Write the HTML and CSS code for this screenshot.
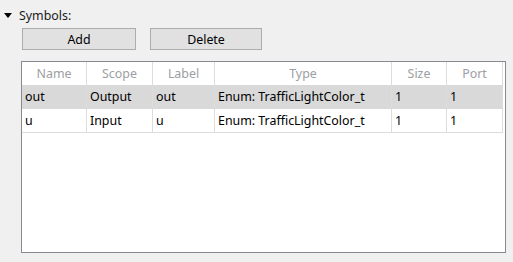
FILE: index.html
```html
<!DOCTYPE html>
<html lang="en">
<head>
  <meta charset="UTF-8">
  <title>Symbols</title>
  <link rel="stylesheet" href="styles.css">
</head>
<body>
  <div class="section">
    <div class="section-title">
      <span class="caret"></span>
      <span>Symbols:</span>
    </div>
    <div class="actions">
      <button class="btn btn-add">Add</button>
      <button class="btn btn-delete">Delete</button>
    </div>
    <div class="grid-box">
      <table class="symbols">
        <thead>
          <tr>
            <th class="c-name">Name</th>
            <th class="c-scope">Scope</th>
            <th class="c-label">Label</th>
            <th class="c-type">Type</th>
            <th class="c-size">Size</th>
            <th class="c-port">Port</th>
          </tr>
        </thead>
        <tbody>
          <tr class="selected">
            <td>out</td>
            <td>Output</td>
            <td>out</td>
            <td>Enum: TrafficLightColor_t</td>
            <td>1</td>
            <td>1</td>
          </tr>
          <tr>
            <td>u</td>
            <td>Input</td>
            <td>u</td>
            <td>Enum: TrafficLightColor_t</td>
            <td>1</td>
            <td>1</td>
          </tr>
        </tbody>
      </table>
    </div>
  </div>
</body>
</html>
```

FILE: styles.css
```css
body {
  margin: 0;
  background-color: #f0f0f0;
  font-family: "Noto Sans", "DejaVu Sans", sans-serif;
  font-size: 12.4px;
  color: #000000;
}
.section {
  display: flex;
  flex-direction: column;
  padding: 6px 0 0 0;
}
.section-title {
  display: flex;
  align-items: center;
  gap: 7px;
  height: 18px;
  padding-left: 4px;
  color: #1a1a1a;
}
.caret {
  width: 0;
  height: 0;
  border-left: 4px solid transparent;
  border-right: 4px solid transparent;
  border-top: 5px solid #000000;
  margin-top: 1px;
}
.actions {
  display: flex;
  gap: 14px;
  margin: 4px 0 0 22px;
}
.btn {
  width: 114px;
  height: 22px;
  padding: 0;
  background-color: #e1e1e1;
  border: 1px solid #adadad;
  font-family: inherit;
  font-size: 12.4px;
  color: #000000;
}
.btn-delete {
  width: 112px;
}
.grid-box {
  margin: 11px 0 0 21px;
  width: 483px;
  height: 190px;
  border: 1px solid #878a91;
  background-color: #ffffff;
}
.symbols {
  border-collapse: collapse;
  table-layout: fixed;
  width: 481px;
}
.symbols th,
.symbols td {
  height: 23px;
  padding: 0 0 0 3px;
  border-right: 1px solid #dcdcdc;
  border-bottom: 1px solid #dcdcdc;
  text-align: left;
  white-space: nowrap;
  overflow: hidden;
}
.symbols th {
  font-weight: normal;
  color: #9c9ea3;
  text-align: center;
  padding: 0;
  border-bottom: none;
}
.symbols tr.selected td {
  background-color: #d9d9d9;
  border-bottom-color: #d9d9d9;
}
.c-name { width: 64px; }
.c-scope { width: 65px; }
.c-label { width: 61px; }
.c-type { width: 176px; }
.c-size { width: 54px; }
.c-port { width: 55px; }
```
